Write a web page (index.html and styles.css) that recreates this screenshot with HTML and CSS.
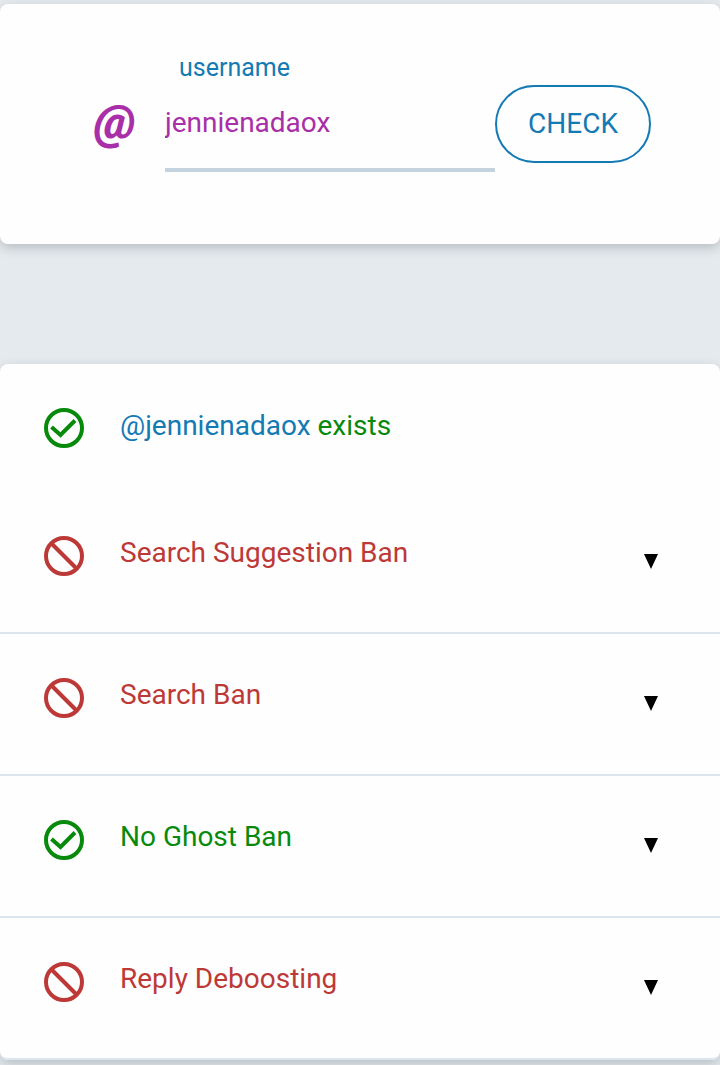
FILE: index.html
```
<!DOCTYPE html>
<html lang="en">
<head>
<meta charset="UTF-8" />
<meta name="viewport" content="width=device-width, initial-scale=1" />
<title>Shadowban Test</title>
<link rel="stylesheet" href="styles.css">
</head>
<body>

  <!-- shared icons -->
  <svg class="sprite" aria-hidden="true">
    <symbol id="icon-ok" viewBox="0 0 40 40">
      <circle cx="20" cy="20" r="18" />
      <path d="M7.500 19l9 8L31 12.500" />
    </symbol>
    <symbol id="icon-ban" viewBox="0 0 40 40">
      <circle cx="20" cy="20" r="18" />
      <path d="M7.500 7.500l25 25" />
    </symbol>
    <symbol id="icon-arrow" viewBox="0 0 14 15">
      <path d="M0 0h14L7 15z" />
    </symbol>
  </svg>

  <form class="card search" onsubmit="return false">
    <span class="at" aria-hidden="true">@</span>
    <div class="field">
      <label for="username">username</label>
      <input id="username" type="text" value="jennienadaox" autocomplete="off" spellcheck="false" />
    </div>
    <button type="submit">CHECK</button>
  </form>

  <main class="card results">
    <div class="row user ok">
      <svg class="icon"><use href="#icon-ok" /></svg>
      <p class="title"><a href="#">@jennienadaox</a> exists</p>
    </div>
    <details class="test bad">
      <summary class="row">
        <svg class="icon"><use href="#icon-ban" /></svg>
        <span class="title">Search Suggestion Ban</span>
        <svg class="arrow"><use href="#icon-arrow" /></svg>
      </summary>
    </details>
    <details class="test bad">
      <summary class="row">
        <svg class="icon"><use href="#icon-ban" /></svg>
        <span class="title">Search Ban</span>
        <svg class="arrow"><use href="#icon-arrow" /></svg>
      </summary>
    </details>
    <details class="test ok">
      <summary class="row">
        <svg class="icon"><use href="#icon-ok" /></svg>
        <span class="title">No Ghost Ban</span>
        <svg class="arrow"><use href="#icon-arrow" /></svg>
      </summary>
    </details>
    <details class="test bad">
      <summary class="row">
        <svg class="icon"><use href="#icon-ban" /></svg>
        <span class="title">Reply Deboosting</span>
        <svg class="arrow"><use href="#icon-arrow" /></svg>
      </summary>
    </details>
  </main>

</body>
</html>
```
FILE: styles.css
```
* {
  box-sizing: border-box;
}
body {
  margin: 0;
  min-height: 100vh;
  padding: 4px 0;
  background: #e5eaee;
  font-family: Roboto, sans-serif;
  font-size: 28px;
  line-height: 40px;
}
.sprite {
  display: none;
}
.card {
  background: #fefefe;
  border-radius: 8px;
  box-shadow: 0 4px 12px rgba(0, 25, 30, 0.2);
}

/* FORM */
.search {
  display: flex;
  align-items: flex-start;
  margin-bottom: 120px;
  padding: 44px 69px 72px 90px;
}
.at {
  width: 75px;
  padding-top: 54px;
  padding-left: 4px;
  color: #a92fa9;
  font-size: 48px;
  font-weight: 900;
  font-style: italic;
}
.field {
  flex: 1;
  min-width: 0;
}
.field label {
  display: block;
  padding-left: 14px;
  color: #147ab4;
  font-size: 25px;
}
.field input {
  display: block;
  width: 100%;
  height: 84px;
  padding: 0 0 12px;
  border: none;
  border-bottom: 4px solid #c5d3df;
  outline: none;
  background: none;
  color: #a92fa9;
  font: inherit;
}
.search button {
  width: 156px;
  height: 78px;
  margin-top: 37px;
  padding: 0;
  border: 2px solid #147ab4;
  border-radius: 39px;
  background: none;
  color: #147ab4;
  font: inherit;
  cursor: pointer;
}

/* RESULTS */
.row {
  display: flex;
  align-items: flex-start;
  min-height: 140px;
  padding: 44px 62px 0 44px;
  list-style: none;
}
.row.user {
  min-height: 128px;
}
summary {
  cursor: pointer;
}
summary::-webkit-details-marker {
  display: none;
}
.test {
  border-bottom: 2px solid #dbe5ee;
}
.test:last-child {
  border-radius: 0 0 8px 8px;
}
.icon {
  flex: none;
  width: 40px;
  height: 40px;
  margin-right: 36px;
  fill: none;
  stroke: currentColor;
  stroke-width: 4px;
}
.title {
  flex: 1;
  margin: -3px 0 0;
}
.row.user .title {
  margin-top: -2px;
}
.arrow {
  width: 14px;
  height: 15px;
  margin-top: 18px;
  fill: #000;
}
.ok {
  color: #078a0c;
}
.bad {
  color: #bd3937;
}
a {
  color: #147ab4;
  text-decoration: none;
}
```
